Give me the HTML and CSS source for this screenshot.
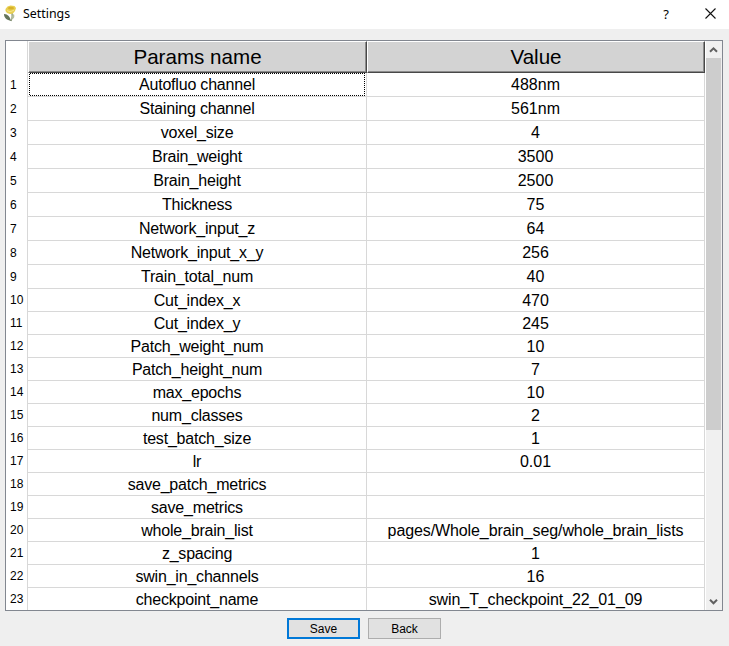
FILE: index.html
```html
<!DOCTYPE html>
<html lang="en">
<head>
<meta charset="utf-8">
<title>Settings</title>
<link rel="stylesheet" href="styles.css">
</head>
<body>
<header class="titlebar">
  <svg class="logo" width="16" height="18" viewBox="0 0 16 18">
    <path d="M8 8Q9 12 7 16" stroke="#75845e" stroke-width="1.2" fill="none"/>
    <path d="M7 16C3 15 0 13 0 9c4 0 6 3 7 7Z" fill="#64745a"/>
    <path d="M7 15c0-3 1-5 3-6 1 3 0 5-3 6Z" fill="#b3bd9f"/>
    <path d="M1.500 4 3.500 1.500l3-1 4 .5 1.500 2-1 3-2 2.500-3 .5-3-1-1.500-2Z" fill="#e8cf50"/>
    <ellipse cx="7" cy="3.2" rx="3" ry="1.4" fill="#d8b12b"/>
    <path d="m3 5.5 3 1.300 4-1.600" stroke="#f3e38c" fill="none"/>
  </svg>
  <span class="title">Settings</span>
  <span class="help">?</span>
  <svg class="close" width="11" height="11" viewBox="0 0 11 11"><path d="m.5.5 10 10m0-10-10 10" stroke="#111" stroke-width="1.1" fill="none"/></svg>
</header>
<main class="frame">
  <div class="table">
    <div class="row head"><span class="num"></span><span class="th">Params name</span><span class="th">Value</span></div>
    <div class="row tall"><span class="num">1</span><span class="cell name focus">Autofluo channel</span><span class="cell">488nm</span></div>
    <div class="row tall"><span class="num">2</span><span class="cell name">Staining channel</span><span class="cell">561nm</span></div>
    <div class="row tall"><span class="num">3</span><span class="cell name">voxel_size</span><span class="cell">4</span></div>
    <div class="row tall"><span class="num">4</span><span class="cell name">Brain_weight</span><span class="cell">3500</span></div>
    <div class="row tall"><span class="num">5</span><span class="cell name">Brain_height</span><span class="cell">2500</span></div>
    <div class="row tall"><span class="num">6</span><span class="cell name">Thickness</span><span class="cell">75</span></div>
    <div class="row tall"><span class="num">7</span><span class="cell name">Network_input_z</span><span class="cell">64</span></div>
    <div class="row tall"><span class="num">8</span><span class="cell name">Network_input_x_y</span><span class="cell">256</span></div>
    <div class="row tall"><span class="num">9</span><span class="cell name">Train_total_num</span><span class="cell">40</span></div>
    <div class="row"><span class="num">10</span><span class="cell name">Cut_index_x</span><span class="cell">470</span></div>
    <div class="row"><span class="num">11</span><span class="cell name">Cut_index_y</span><span class="cell">245</span></div>
    <div class="row"><span class="num">12</span><span class="cell name">Patch_weight_num</span><span class="cell">10</span></div>
    <div class="row"><span class="num">13</span><span class="cell name">Patch_height_num</span><span class="cell">7</span></div>
    <div class="row"><span class="num">14</span><span class="cell name">max_epochs</span><span class="cell">10</span></div>
    <div class="row"><span class="num">15</span><span class="cell name">num_classes</span><span class="cell">2</span></div>
    <div class="row"><span class="num">16</span><span class="cell name">test_batch_size</span><span class="cell">1</span></div>
    <div class="row"><span class="num">17</span><span class="cell name">lr</span><span class="cell">0.01</span></div>
    <div class="row"><span class="num">18</span><span class="cell name">save_patch_metrics</span><span class="cell"></span></div>
    <div class="row"><span class="num">19</span><span class="cell name">save_metrics</span><span class="cell"></span></div>
    <div class="row"><span class="num">20</span><span class="cell name">whole_brain_list</span><span class="cell path">pages/Whole_brain_seg/whole_brain_lists</span></div>
    <div class="row"><span class="num">21</span><span class="cell name">z_spacing</span><span class="cell">1</span></div>
    <div class="row"><span class="num">22</span><span class="cell name">swin_in_channels</span><span class="cell">16</span></div>
    <div class="row"><span class="num">23</span><span class="cell name">checkpoint_name</span><span class="cell path">swin_T_checkpoint_22_01_09</span></div>
  </div>
  <div class="scrollbar">
    <svg class="arrow" width="17" height="17" viewBox="0 0 17 17"><path d="m5 10.8 3.5-3.5 3.5 3.5" stroke="#606060" stroke-width="2" fill="none"/></svg>
    <div class="thumb"></div>
    <svg class="arrow" width="17" height="17" viewBox="0 0 17 17"><path d="m5 6.8 3.5 3.5L12 6.8" stroke="#606060" stroke-width="2" fill="none"/></svg>
  </div>
</main>
<footer class="actions">
  <button class="btn primary">Save</button>
  <button class="btn">Back</button>
</footer>
</body>
</html>
```
FILE: styles.css
```css
* { box-sizing: border-box; }
body {
  margin: 0;
  height: 646px;
  overflow: hidden;
  background: #efefef;
  color: #000;
  font-family: "Liberation Sans", Arial, sans-serif;
}
.titlebar {
  display: flex;
  align-items: center;
  height: 29px;
  padding: 0 13px 2px 4px;
  background: #fff;
}
.title {
  flex: 1;
  margin-left: 3px;
  font: 12.4px/16px "Noto Sans", sans-serif;
}
.help { margin-right: 36px; font: 13px/16px "Noto Sans", sans-serif; }
.frame {
  display: flex;
  width: 718px;
  height: 571px;
  margin: 11px 0 0 5px;
  border: 1px solid #828790;
  background: #fff;
}
.table { width: 699px; height: 569px; overflow: hidden; }
.row {
  display: grid;
  grid-template-columns: 22px 339px 338px;
  grid-template-rows: 100%;
  height: 23px;
}
.tall { height: 24px; }
.head { height: 32px; }
.num {
  padding: 1px 0 0 4px;
  border-right: 1px solid #d8d8d8;
  font-size: 12px;
  line-height: 21px;
}
.tall .num { padding-top: 2px; }
.th {
  border: 1px solid;
  border-color: #fff #484848 #484848 #fff;
  box-shadow: inset -1px -1px #8c8c8c;
  background: #d3d3d3;
  font-size: 20.6px;
  line-height: 30px;
  text-align: center;
}
.cell {
  border: solid #d8d8d8;
  border-width: 0 1px 1px 0;
  font-size: 16px;
  line-height: 23px;
  text-align: center;
  white-space: nowrap;
}
.name { letter-spacing: -0.2px; }
.path { letter-spacing: -0.1px; }
.row:last-child .cell { border-bottom: 0; }
.focus { position: relative; }
.focus::after {
  content: "";
  position: absolute;
  inset: 0 1px 0 1px;
  padding: 1px;
  background: repeating-conic-gradient(#000 0 25%, transparent 0 50%) 0 0 / 2px 2px;
  mask: linear-gradient(#000 0 0) content-box exclude, linear-gradient(#000 0 0);
}
.scrollbar {
  display: flex;
  flex-direction: column;
  width: 17px;
  padding-right: 1px;
  border-left: 1px solid #fff;
  background: #f0f0f0;
}
.arrow { flex: none; margin-left: -1px; }
.arrow:last-child { margin-top: auto; }
.thumb { height: 372px; background: #cdcdcd; }
.actions {
  display: flex;
  justify-content: center;
  gap: 8px;
  padding: 7px 1px 0 0;
}
.btn {
  width: 73px;
  height: 21px;
  padding: 1px 0 0;
  border: 1px solid #adadad;
  background: #e1e1e1;
  color: #000;
  font: 12px/18px "Liberation Sans", Arial, sans-serif;
}
.primary { border: 2px solid #0078d7; line-height: 16px; }
```
